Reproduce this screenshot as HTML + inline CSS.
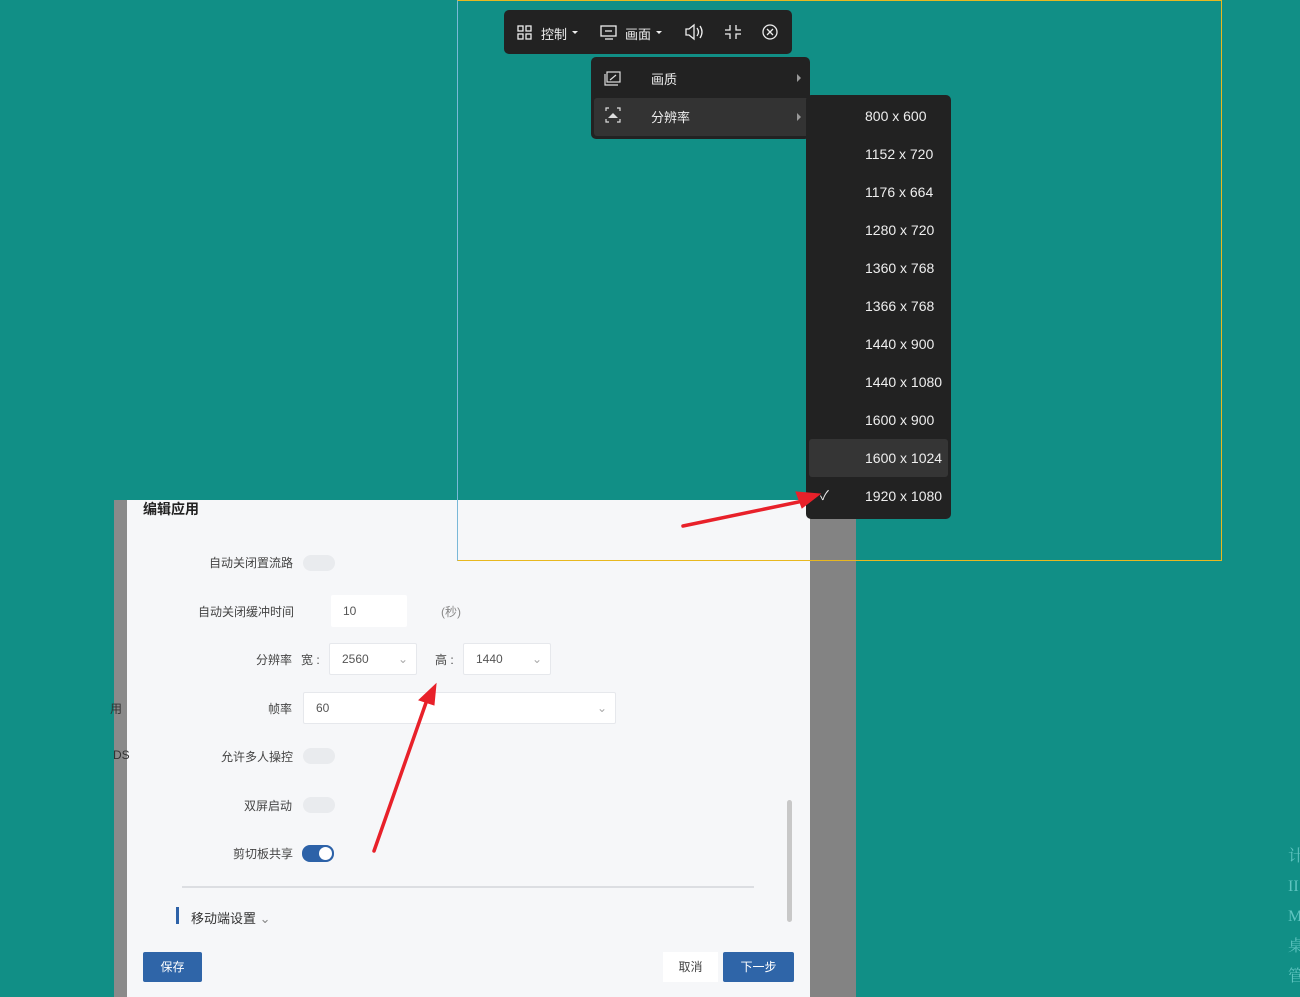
<!DOCTYPE html>
<html><head><meta charset="utf-8"><style>
*{margin:0;padding:0;box-sizing:border-box}
body{width:1300px;height:997px;background:#118f86;position:relative;overflow:hidden;font-family:"Liberation Sans","Noto Sans CJK SC",sans-serif}
.abs{position:absolute}
.t{position:absolute;font-size:12px;color:#444;white-space:nowrap}
.sw{position:absolute;width:32px;height:16px;border-radius:8px;background:#e9ebee}
.inp{position:absolute;background:#fff;border:1px solid #e6e8ec;border-radius:2px;font-size:12px;color:#555;padding-left:12px;line-height:30px;height:32px}
.m{color:#eee;font-size:13px}
.res div{height:38px;line-height:38px;text-align:left;padding-left:59px;color:#eee;font-size:14px;position:relative}
</style></head><body>
<div class="abs" style="left:114px;top:500px;width:14px;height:497px;background:#8a8a8a"></div>
<div class="abs" style="left:127px;top:500px;width:683px;height:497px;background:#f6f7f9"></div>
<div class="abs" style="left:810px;top:500px;width:46px;height:497px;background:#838383"></div>
<div class="t" style="left:143px;top:499px;font-size:14px;color:#222;font-weight:bold">编辑应用</div>
<div class="t" style="left:110px;top:700px;color:#333">用</div>
<div class="t" style="left:113px;top:748px;color:#333">DS</div>
<div class="t" style="left:209px;top:554px">自动关闭置流路</div>
<div class="sw" style="left:303px;top:555px"></div>
<div class="t" style="left:198px;top:603px">自动关闭缓冲时间</div>
<div class="inp" style="left:331px;top:595px;width:76px;border:none;line-height:32px">10</div>
<div class="t" style="left:441px;top:603px;color:#888">(秒)</div>
<div class="t" style="left:256px;top:651px">分辨率</div>
<div class="t" style="left:301px;top:651px">宽 :</div>
<div class="inp" style="left:329px;top:643px;width:88px">2560<span style="position:absolute;right:8px;color:#aaa">⌄</span></div>
<div class="t" style="left:435px;top:651px">高 :</div>
<div class="inp" style="left:463px;top:643px;width:88px">1440<span style="position:absolute;right:8px;color:#aaa">⌄</span></div>
<div class="t" style="left:268px;top:700px">帧率</div>
<div class="inp" style="left:303px;top:692px;width:313px">60<span style="position:absolute;right:8px;color:#aaa">⌄</span></div>
<div class="t" style="left:221px;top:748px">允许多人操控</div>
<div class="sw" style="left:303px;top:748px"></div>
<div class="t" style="left:244px;top:797px">双屏启动</div>
<div class="sw" style="left:303px;top:797px"></div>
<div class="t" style="left:233px;top:845px">剪切板共享</div>
<div class="sw" style="left:302px;top:845px;background:#2d62a8;height:17px"><div style="position:absolute;right:2px;top:2px;width:13px;height:13px;border-radius:50%;background:#fff"></div></div>
<div class="abs" style="left:182px;top:886px;width:572px;height:2px;background:#dcdee2"></div>
<div class="abs" style="left:176px;top:907px;width:3px;height:17px;background:#2d62a8"></div>
<div class="t" style="left:191px;top:908px;font-size:13px;color:#333">移动端设置 <span style="color:#888">⌄</span></div>
<div class="abs" style="left:787px;top:800px;width:5px;height:122px;background:#c8c8c8;border-radius:3px"></div>
<div class="abs" style="left:143px;top:952px;width:59px;height:30px;background:#2f65a8;border-radius:2px;color:#fff;font-size:12px;text-align:center;line-height:30px">保存</div>
<div class="abs" style="left:663px;top:952px;width:55px;height:30px;background:#fff;color:#444;font-size:12px;text-align:center;line-height:30px">取消</div>
<div class="abs" style="left:723px;top:952px;width:71px;height:30px;background:#2f65a8;border-radius:2px;color:#fff;font-size:12px;text-align:center;line-height:30px">下一步</div>
<div class="abs" style="left:457px;top:0;width:765px;height:561px;border:1px solid #e8b820;border-left-color:#7ab8d8"></div>
<div class="abs" style="left:504px;top:10px;width:288px;height:44px;background:#222;border-radius:5px"></div>
<svg class="abs" style="left:504px;top:10px" width="288" height="44" fill="none" stroke="#eee" stroke-width="1.3">
<rect x="14" y="16" width="5" height="5"/><rect x="22" y="16" width="5" height="5"/><rect x="14" y="24" width="5" height="5"/><rect x="22" y="24" width="5" height="5"/>
<path d="M68 21l3 3 3-3z" fill="#eee" stroke="none"/>
<rect x="97" y="16" width="15" height="10"/><path d="M101 29h8M101 21h7"/>
<path d="M152 21l3 3 3-3z" fill="#eee" stroke="none"/>
<path d="M182 19h3l5-4v14l-5-4h-3z"/><path d="M193 18q3 4 0 8M196 16q4 6 0 12"/>
<path d="M226 15v5h-5M232 15v5h5M226 29v-5h-5M232 29v-5h5"/>
<circle cx="266" cy="22" r="7"/><path d="M263 19l6 6M269 19l-6 6"/>
</svg>
<div class="abs m" style="left:541px;top:24px">控制</div>
<div class="abs m" style="left:625px;top:24px">画面</div>
<div class="abs" style="left:591px;top:57px;width:219px;height:82px;background:#222;border-radius:5px"></div>
<div class="abs" style="left:594px;top:98px;width:216px;height:38px;background:#333;border-radius:3px"></div>
<svg class="abs" style="left:591px;top:57px" width="219" height="82" fill="none" stroke="#ddd" stroke-width="1.2">
<rect x="16" y="15" width="13" height="10"/><path d="M14 17v11h13M19 23l6-5"/>
<path d="M15 54v-3h3M26 51h3v3M15 62v3h3M26 65h3v-3"/><path d="M17 61l5-5 5 5z" fill="#ddd" stroke="none"/>
<path d="M206 17l4 4-4 4zM206 56l4 4-4 4z" fill="#999" stroke="none"/>
</svg>
<div class="abs m" style="left:651px;top:69px">画质</div>
<div class="abs m" style="left:651px;top:107px">分辨率</div>
<div class="abs res" style="left:806px;top:95px;width:145px;height:424px;background:#222;border-radius:5px;padding-top:2px">
<div>800 x 600</div><div>1152 x 720</div><div>1176 x 664</div><div>1280 x 720</div><div>1360 x 768</div><div>1366 x 768</div><div>1440 x 900</div><div>1440 x 1080</div><div>1600 x 900</div>
<div style="background:#353535;margin:0 3px;border-radius:3px;padding-left:56px">1600 x 1024</div>
<div>1920 x 1080<span style="position:absolute;left:14px;top:0;font-size:13px">✓</span></div>
</div>
<svg class="abs" style="left:0;top:0" width="1300" height="997">
<g stroke="#e8212a" stroke-width="3.5" stroke-linecap="round" fill="#e8212a">
<path d="M683 526L808 500"/><path d="M820 494l-24 -2 6 16z" stroke-width="1"/>
<path d="M374 851L428 697"/><path d="M436 684l-17 16 15 5z" stroke-width="1"/>
</g></svg>
<div class="abs" style="left:1288px;top:842px;color:#5fc4c0;font-family:'Liberation Serif','Noto Serif CJK SC',serif;font-size:16px;line-height:30px">计<br>II<br>Ma<br>桌<br>管</div>
</body></html>
